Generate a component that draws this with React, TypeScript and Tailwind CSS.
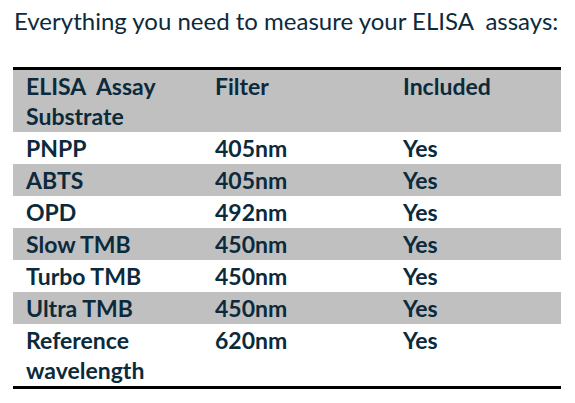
import React from 'react'

const rows = [
  { name: 'PNPP', filter: '405nm', shaded: false },
  { name: 'ABTS', filter: '405nm', shaded: true },
  { name: 'OPD', filter: '492nm', shaded: false },
  { name: 'Slow TMB', filter: '450nm', shaded: true },
  { name: 'Turbo TMB', filter: '450nm', shaded: false },
  { name: 'Ultra TMB', filter: '450nm', shaded: true },
]

export default function App() {
  return (
    <div className="w-[575px] h-[403px] bg-white text-[#0b2a3c] font-['Lato','Liberation_Sans',sans-serif] overflow-hidden">
      <h1 className="pl-[14px] pt-[6px] text-[24px] leading-[30px] whitespace-pre">
        Everything you need to measure your ELISA  assays:
      </h1>

      <table className="ml-[13px] mt-[31px] w-[548px] border-collapse border-y-[3px] border-black text-[23px] leading-[30px] font-bold">
        <tbody>
          <tr className="bg-[#c0c0c0] align-top">
            <td className="w-[190px] pl-[13px] py-[1px] whitespace-pre">{'ELISA  Assay\nSubstrate'}</td>
            <td className="w-[188px] pl-[12px] py-[1px]">Filter</td>
            <td className="pl-[12px] py-[1px]">Included</td>
          </tr>
          {rows.map((r) => (
            <tr key={r.name} className={r.shaded ? 'bg-[#c0c0c0]' : 'bg-white'}>
              <td className="pl-[13px] py-[1px]">{r.name}</td>
              <td className="pl-[12px] py-[1px]">{r.filter}</td>
              <td className="pl-[12px] py-[1px]">Yes</td>
            </tr>
          ))}
          <tr className="align-top">
            <td className="pl-[13px] py-[1px]">
              Reference
              <br />
              wavelength
            </td>
            <td className="pl-[12px] py-[1px]">620nm</td>
            <td className="pl-[12px] py-[1px]">Yes</td>
          </tr>
        </tbody>
      </table>
    </div>
  )
}
